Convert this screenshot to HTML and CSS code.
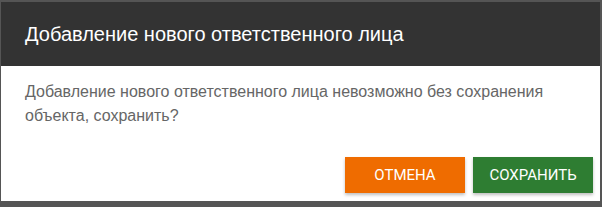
FILE: index.html
```html
<!DOCTYPE html>
<html>
<head>
<meta charset="utf-8">
<link rel="stylesheet" href="styles.css">
</head>
<body>
<div class="dialog">
  <div class="header">Добавление нового ответственного лица</div>
  <div class="content">Добавление нового ответственного лица невозможно без сохранения объекта, сохранить?</div>
  <div class="actions">
    <button class="btn cancel">Отмена</button>
    <button class="btn save">Сохранить</button>
  </div>
</div>
</body>
</html>
```
FILE: styles.css
```css
html, body {
  margin: 0;
  padding: 0;
  background: #555555;
  width: 602px;
  height: 207px;
  overflow: hidden;
}
.dialog {
  margin: 2px 0 0 1px;
  width: 599px;
  height: 199px;
  background: #ffffff;
  display: flex;
  flex-direction: column;
  font-family: "Liberation Sans", Arial, sans-serif;
}
.header {
  height: 64px;
  flex: none;
  background: #333333;
  color: #ffffff;
  font-size: 20px;
  padding: 0 24px;
  display: flex;
  align-items: center;
  box-sizing: border-box;
}
.content {
  padding: 14px 24px 0 24px;
  font-size: 16px;
  line-height: 24px;
  color: #666666;
  flex: 1;
}
.actions {
  display: flex;
  justify-content: flex-end;
  gap: 8px;
  padding: 0 7px 8px 0;
}
.btn {
  width: 120px;
  height: 36px;
  border: none;
  color: #ffffff;
  font-family: Roboto, "Liberation Sans", sans-serif;
  font-size: 15px;
  text-transform: uppercase;
  box-shadow: 0 2px 3px rgba(0,0,0,0.25);
  padding: 0;
}
.cancel { background: #ef6c00; }
.save { background: #2e7d32; }
```
